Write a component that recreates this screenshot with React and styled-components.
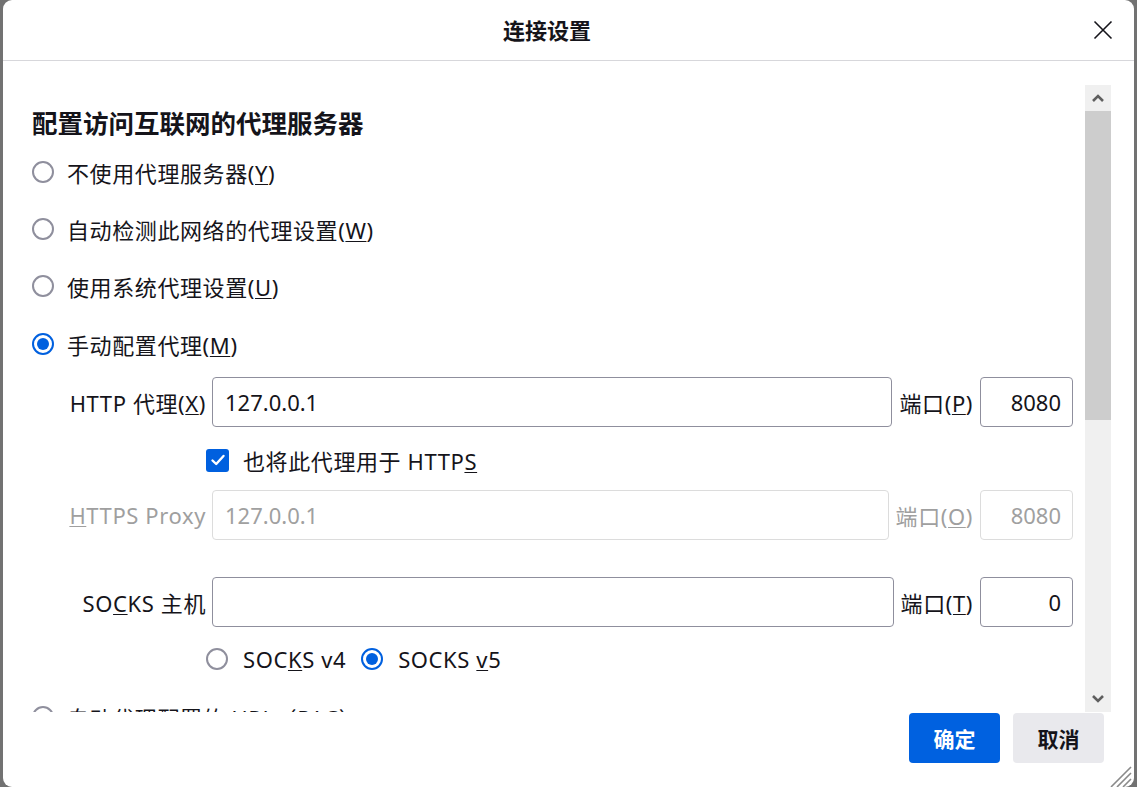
import React from 'react';
import styled, { createGlobalStyle } from 'styled-components';

const GlobalStyle = createGlobalStyle`
  html, body {
    margin: 0;
    padding: 0;
    background: #727272;
    height: 100%;
    overflow: hidden;
  }
  body {
    font-family: "Noto Sans", "Noto Sans CJK SC", sans-serif;
    color: #15141a;
  }
`;

const Dialog = styled.div`
  position: relative;
  margin-left: 3px;
  width: 1131px;
  height: 787px;
  background: #fff;
  border-radius: 9px;
  display: flex;
  flex-direction: column;
  overflow: hidden;
`;

const Header = styled.div`
  height: 60px;
  flex: none;
  border-bottom: 1px solid #d7d7db;
  display: flex;
  align-items: center;
  padding-right: 19px;
`;

const Title = styled.h1`
  flex: 1;
  margin: 0;
  text-align: center;
  font-size: 22px;
  font-weight: 700;
  line-height: 30px;
`;

const CloseButton = styled.button`
  width: 24px;
  height: 24px;
  padding: 0;
  border: none;
  background: transparent;
  display: flex;
  align-items: center;
  justify-content: center;
`;

const Body = styled.div`
  margin-top: 24px;
  height: 627px;
  flex: none;
  display: flex;
  overflow: hidden;
`;

const Content = styled.div`
  flex: 1;
  padding: 23px 12px 0 29px;
  overflow: hidden;
  display: flex;
  flex-direction: column;
`;

const Heading = styled.h2`
  margin: 0;
  font-size: 25.5px;
  font-weight: 700;
  line-height: 30px;
`;

const OptionRow = styled.label`
  display: flex;
  align-items: center;
  height: 30px;
  gap: 13px;
  font-size: 22px;
  letter-spacing: 0.6px;
  margin-top: ${p => p.$mt || 27}px;
  flex: none;
`;

const Radio = styled.span`
  width: 22px;
  height: 22px;
  box-sizing: border-box;
  border-radius: 50%;
  border: 2px solid ${p => (p.$checked ? '#0060df' : '#8f8f9d')};
  display: flex;
  align-items: center;
  justify-content: center;
  flex: none;
  &::after {
    content: '';
    width: 12px;
    height: 12px;
    border-radius: 50%;
    background: #0060df;
    display: ${p => (p.$checked ? 'block' : 'none')};
  }
`;

const Key = styled.u`
  text-decoration-thickness: 1px;
  text-underline-offset: 2px;
`;

const Manual = styled.div`
  padding-left: 28px;
  display: flex;
  flex-direction: column;
  flex: none;
`;

const FieldRow = styled.div`
  display: flex;
  align-items: center;
  height: 50px;
  margin-top: ${p => p.$mt || 0}px;
  font-size: 22px;
  letter-spacing: 0.6px;
  color: ${p => (p.$disabled ? '#9f9f9f' : '#15141a')};
`;

const FieldLabel = styled.span`
  width: 146px;
  flex: none;
  text-align: right;
  white-space: nowrap;
`;

const TextBox = styled.div`
  flex: 1;
  height: 50px;
  box-sizing: border-box;
  margin-left: 6px;
  border: 1px solid ${p => (p.$disabled ? '#dcdcdc' : '#8f8f9d')};
  border-radius: 4px;
  padding: 0 12px;
  display: flex;
  align-items: center;
  font-size: 22px;
  letter-spacing: 0;
  color: ${p => (p.$disabled ? '#a0a0a0' : '#15141a')};
`;

const PortLabel = styled.span`
  margin: 0 7px;
  white-space: nowrap;
`;

const PortBox = styled(TextBox)`
  flex: none;
  width: 93px;
  margin-left: 0;
  justify-content: flex-end;
  padding: 0 11px;
`;

const SubOption = styled.div`
  display: flex;
  align-items: center;
  height: 30px;
  padding-left: 146px;
  margin-top: ${p => p.$mt || 0}px;
  font-size: 22px;
  letter-spacing: 0.6px;
`;

const Check = styled.span`
  width: 23px;
  height: 23px;
  border-radius: 3px;
  background: #0060df;
  display: flex;
  align-items: center;
  justify-content: center;
  margin-right: 14px;
  flex: none;
`;

const VersionItem = styled.span`
  display: flex;
  align-items: center;
  gap: 15px;
  margin-right: 15px;
`;

const Scrollbar = styled.div`
  width: 26px;
  flex: none;
  margin-right: 23px;
  background: #f0f0f0;
  display: flex;
  flex-direction: column;
`;

const ScrollArrow = styled.div`
  height: 26px;
  flex: none;
  display: flex;
  align-items: center;
  justify-content: center;
`;

const Thumb = styled.div`
  height: 309px;
  background: #cdcdcd;
  flex: none;
`;

const Track = styled.div`
  flex: 1;
`;

const Footer = styled.div`
  flex: 1;
  display: flex;
  justify-content: flex-end;
  align-items: flex-start;
  gap: 13px;
  padding: 1px 30px 0 0;
`;

const Button = styled.button`
  width: 91px;
  height: 50px;
  border: none;
  border-radius: 4px;
  font-family: inherit;
  font-size: 21px;
  font-weight: 700;
  background: ${p => (p.$primary ? '#0061e0' : '#e9e9ed')};
  color: ${p => (p.$primary ? '#fff' : '#15141a')};
`;

const Grip = styled.svg`
  position: absolute;
  right: 2px;
  bottom: 0;
`;

const Chevron = ({ up }) => (
  <svg width="14" height="10" viewBox="0 0 14 10">
    <path
      d={up ? 'M2 8 L7 3 L12 8' : 'M2 2 L7 7 L12 2'}
      fill="none"
      stroke="#5f5f5f"
      strokeWidth="2.6"
      strokeLinejoin="miter"
    />
  </svg>
);

export default function App() {
  return (
    <>
      <GlobalStyle />
      <Dialog>
        <Header>
          <Title>连接设置</Title>
          <CloseButton>
            <svg width="20" height="20" viewBox="0 0 20 20">
              <path d="M1.5 1.5 L18.5 18.5 M18.5 1.5 L1.5 18.5" stroke="#15141a" strokeWidth="1.6" />
            </svg>
          </CloseButton>
        </Header>

        <Body>
          <Content>
            <Heading>配置访问互联网的代理服务器</Heading>
            <OptionRow $mt={19}>
              <Radio />
              <span>不使用代理服务器(<Key>Y</Key>)</span>
            </OptionRow>
            <OptionRow>
              <Radio />
              <span>自动检测此网络的代理设置(<Key>W</Key>)</span>
            </OptionRow>
            <OptionRow>
              <Radio />
              <span>使用系统代理设置(<Key>U</Key>)</span>
            </OptionRow>
            <OptionRow $mt={28}>
              <Radio $checked />
              <span>手动配置代理(<Key>M</Key>)</span>
            </OptionRow>

            <Manual>
              <FieldRow $mt={18}>
                <FieldLabel>HTTP 代理(<Key>X</Key>)</FieldLabel>
                <TextBox>127.0.0.1</TextBox>
                <PortLabel>端口(<Key>P</Key>)</PortLabel>
                <PortBox>8080</PortBox>
              </FieldRow>
              <SubOption $mt={18}>
                <Check>
                  <svg width="16" height="16" viewBox="0 0 16 16">
                    <path d="M2.5 8.5 L6.2 12 L13.5 4" fill="none" stroke="#fff" strokeWidth="2.4" strokeLinecap="round" strokeLinejoin="round" />
                  </svg>
                </Check>
                <span>也将此代理用于 HTTP<Key>S</Key></span>
              </SubOption>
              <FieldRow $mt={15} $disabled>
                <FieldLabel><Key>H</Key>TTPS Proxy</FieldLabel>
                <TextBox $disabled>127.0.0.1</TextBox>
                <PortLabel>端口(<Key>O</Key>)</PortLabel>
                <PortBox $disabled>8080</PortBox>
              </FieldRow>
              <FieldRow $mt={37}>
                <FieldLabel>SO<Key>C</Key>KS 主机</FieldLabel>
                <TextBox />
                <PortLabel>端口(<Key>T</Key>)</PortLabel>
                <PortBox>0</PortBox>
              </FieldRow>
              <SubOption $mt={17}>
                <VersionItem>
                  <Radio />
                  <span>SOC<Key>K</Key>S v4</span>
                </VersionItem>
                <VersionItem>
                  <Radio $checked />
                  <span>SOCKS <Key>v</Key>5</span>
                </VersionItem>
              </SubOption>
            </Manual>

            <OptionRow $mt={28}>
              <Radio />
              <span>自动代理配置的 URL（PAC）</span>
            </OptionRow>
          </Content>

          <Scrollbar>
            <ScrollArrow><Chevron up /></ScrollArrow>
            <Thumb />
            <Track />
            <ScrollArrow><Chevron /></ScrollArrow>
          </Scrollbar>
        </Body>

        <Footer>
          <Button $primary>确定</Button>
          <Button>取消</Button>
        </Footer>

        <Grip width="24" height="22" viewBox="0 0 24 22">
          <path d="M3 22 L23 2 M9 22 L23 8 M15 22 L23 14" stroke="#8a8a8a" strokeWidth="1.6" />
        </Grip>
      </Dialog>
    </>
  );
}
